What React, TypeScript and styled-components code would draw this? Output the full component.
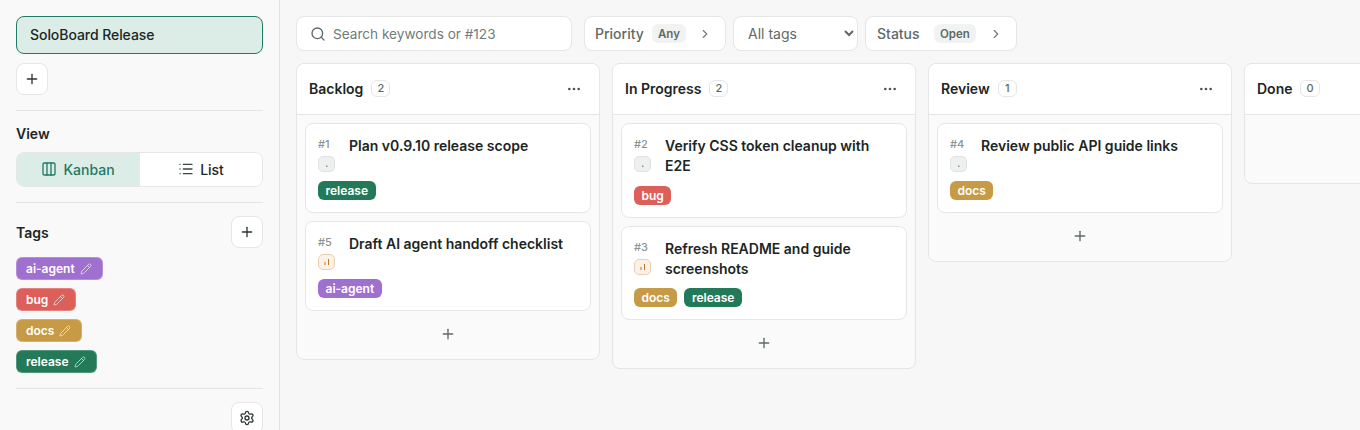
import React from 'react';
import styled, { createGlobalStyle } from 'styled-components';
import { Columns3, List, Pencil, Plus, Search, Settings, ChevronRight, Ellipsis } from 'lucide-react';

const TAG_COLORS: Record<string, string> = {
  'ai-agent': '#9f70cf',
  bug: '#dc5f5a',
  docs: '#c79a45',
  release: '#227a59',
};

type Priority = 'none' | 'medium';

interface CardData {
  id: number;
  title: string;
  priority: Priority;
  tags: string[];
}

interface ColumnData {
  name: string;
  cards: CardData[];
}

const columns: ColumnData[] = [
  {
    name: 'Backlog',
    cards: [
      { id: 1, title: 'Plan v0.9.10 release scope', priority: 'none', tags: ['release'] },
      { id: 5, title: 'Draft AI agent handoff checklist', priority: 'medium', tags: ['ai-agent'] },
    ],
  },
  {
    name: 'In Progress',
    cards: [
      { id: 2, title: 'Verify CSS token cleanup with E2E', priority: 'none', tags: ['bug'] },
      { id: 3, title: 'Refresh README and guide screenshots', priority: 'medium', tags: ['docs', 'release'] },
    ],
  },
  {
    name: 'Review',
    cards: [{ id: 4, title: 'Review public API guide links', priority: 'none', tags: ['docs'] }],
  },
  { name: 'Done', cards: [] },
];

const App = () => {
  return (
    <Page>
      <GlobalStyle />
      <Sidebar>
        <ProjectButton>SoloBoard Release</ProjectButton>
        <IconButton $top={9} aria-label='Add board'>
          <Plus size={16} />
        </IconButton>
        <Divider />
        <SectionTitle>View</SectionTitle>
        <Segmented>
          <Segment $active>
            <Columns3 size={16} />
            Kanban
          </Segment>
          <Segment>
            <List size={16} />
            List
          </Segment>
        </Segmented>
        <Divider />
        <TagsHeader>
          <SectionTitle>Tags</SectionTitle>
          <IconButton aria-label='Add tag'>
            <Plus size={16} />
          </IconButton>
        </TagsHeader>
        <TagList>
          {Object.keys(TAG_COLORS).map((tag) => (
            <TagRow key={tag} $color={TAG_COLORS[tag]}>
              {tag}
              <Pencil size={12} strokeWidth={1.5} />
            </TagRow>
          ))}
        </TagList>
        <Divider />
        <SettingsRow>
          <IconButton aria-label='Settings'>
            <Settings size={16} />
          </IconButton>
        </SettingsRow>
      </Sidebar>
      <Main>
        <Toolbar>
          <SearchBox>
            <Search size={16} />
            Search keywords or #123
          </SearchBox>
          <FilterButton $width={142} $pad={10}>
            <FilterLabel>Priority</FilterLabel>
            <FilterValue>Any</FilterValue>
            <ChevronRight size={14} />
          </FilterButton>
          <TagSelect defaultValue='all'>
            <option value='all'>All tags</option>
          </TagSelect>
          <FilterButton $width={152} $pad={11}>
            <FilterLabel>Status</FilterLabel>
            <FilterValue>Open</FilterValue>
            <ChevronRight size={14} />
          </FilterButton>
        </Toolbar>
        <Board>
          {columns.map((column) => (
            <Column key={column.name}>
              <ColumnHeader>
                <ColumnName>{column.name}</ColumnName>
                <Count>{column.cards.length}</Count>
                {column.cards.length > 0 && (
                  <MoreButton aria-label='Column menu'>
                    <Ellipsis size={16} />
                  </MoreButton>
                )}
              </ColumnHeader>
              {column.cards.length > 0 ? (
                <ColumnBody>
                  {column.cards.map((card) => (
                    <Card key={card.id}>
                      <CardTop>
                        <CardMeta>
                          <CardId>#{card.id}</CardId>
                          <PriorityBadge $priority={card.priority}>
                            {card.priority === 'medium' ? (
                              <svg width='8' height='8' viewBox='0 0 8 8'>
                                <rect x='1.5' y='4' width='1' height='3' fill='#c2741f' />
                                <rect x='5' y='1' width='1' height='6' fill='#c2741f' />
                              </svg>
                            ) : (
                              <svg width='8' height='8' viewBox='0 0 8 8'>
                                <rect x='3' y='5.5' width='1.4' height='1.5' fill='#7d8985' />
                              </svg>
                            )}
                          </PriorityBadge>
                        </CardMeta>
                        <CardTitle>{card.title}</CardTitle>
                      </CardTop>
                      <CardTags>
                        {card.tags.map((tag) => (
                          <CardTag key={tag} $color={TAG_COLORS[tag]}>
                            {tag}
                          </CardTag>
                        ))}
                      </CardTags>
                    </Card>
                  ))}
                  <AddCard aria-label='Add card'>
                    <Plus size={16} />
                  </AddCard>
                </ColumnBody>
              ) : (
                <EmptyBody />
              )}
            </Column>
          ))}
        </Board>
      </Main>
    </Page>
  );
};

export default App;

const GlobalStyle = createGlobalStyle`
  html, body {
    margin: 0;
    height: 430px;
    overflow: hidden;
    background: #f7f7f7;
  }

  * {
    box-sizing: border-box;
  }

  body {
    font-family: Inter, 'Noto Sans', sans-serif;
    color: #1c2624;
  }
`;

const Page = styled.div`
  display: flex;
  width: 1360px;
  height: 430px;
  overflow: hidden;
`;

const Sidebar = styled.aside`
  flex: 0 0 280px;
  padding: 16px 16px 0;
  background: #f9f9f9;
  border-right: 1px solid #e4e4e4;
  display: flex;
  flex-direction: column;
  align-items: stretch;
  overflow: hidden;

  > * {
    flex: none;
  }
`;

const ProjectButton = styled.div`
  height: 38px;
  padding: 0 13px 2px;
  display: flex;
  align-items: center;
  font-size: 14px;
  letter-spacing: -0.06px;
  font-weight: 500;
  color: #1c2624;
  background: #dcede8;
  border: 1px solid #227a64;
  border-radius: 8px;
`;

const IconButton = styled.button<{ $top?: number }>`
  flex: none;
  width: 32px;
  height: 32px;
  margin-top: ${({ $top }) => $top || 0}px;
  padding: 0;
  display: flex;
  align-items: center;
  justify-content: center;
  color: #2c3634;
  background: #fff;
  border: 1px solid #e6e6e6;
  border-radius: 8px;
`;

const Divider = styled.div`
  height: 1px;
  margin: 15px 0 13px;
  background: #e4e4e4;
`;

const SectionTitle = styled.div`
  padding-top: 1px;
  font-size: 14px;
  line-height: 18px;
  font-weight: 600;
  color: #1c2624;
`;

const Segmented = styled.div`
  display: flex;
  height: 35px;
  margin-top: 9px;
  background: #fff;
  border: 1px solid #e6e6e6;
  border-radius: 8px;
  overflow: hidden;
`;

const Segment = styled.div<{ $active?: boolean }>`
  flex: 1;
  padding-bottom: 1px;
  display: flex;
  align-items: center;
  justify-content: center;
  gap: 6px;
  font-size: 14px;
  font-weight: 500;
  color: ${({ $active }) => ($active ? '#227a64' : '#1c2624')};
  background: ${({ $active }) => ($active ? '#dcede8' : '#fff')};
  border-right: ${({ $active }) => ($active ? '1px solid #e6e6e6' : 'none')};

  svg {
    color: ${({ $active }) => ($active ? '#227a64' : '#3c4644')};
  }
`;

const TagsHeader = styled.div`
  display: flex;
  align-items: center;
  justify-content: space-between;
`;

const TagList = styled.div`
  display: flex;
  flex-direction: column;
  align-items: flex-start;
  gap: 8px;
  margin-top: 9px;
`;

const TagRow = styled.div<{ $color: string }>`
  height: 23px;
  padding: 0 10px 0 9px;
  display: flex;
  align-items: center;
  gap: 5px;
  font-size: 12px;
  font-weight: 600;
  color: #fff;
  background: ${({ $color }) => $color};
  border: 1px solid rgba(255, 255, 255, 0.22);
  border-radius: 6px;

  svg {
    opacity: 0.85;
  }
`;

const SettingsRow = styled.div`
  display: flex;
  justify-content: flex-end;
`;

const Main = styled.main`
  flex: 1;
  min-width: 0;
  padding: 16px 0 0 16px;
  background: #f7f7f7;
`;

const Toolbar = styled.div`
  display: flex;
  gap: 7px;
  height: 35px;
`;

const SearchBox = styled.div`
  width: 276px;
  margin-right: 5px;
  padding: 0 13px;
  display: flex;
  align-items: center;
  gap: 7px;
  font-size: 13.6px;
  color: #717c78;
  background: #fff;
  border: 1px solid #e6e6e6;
  border-radius: 8px;

  svg {
    color: #5e6a66;
  }
`;

const FilterButton = styled.div<{ $width: number; $pad: number }>`
  width: ${({ $width }) => $width}px;
  padding: 0 13px 0 ${({ $pad }) => $pad}px;
  display: flex;
  align-items: center;
  font-size: 14px;
  font-weight: 500;
  color: #5e6a66;
  background: #fff;
  border: 1px solid #e6e6e6;
  border-radius: 8px;

  svg {
    margin-left: auto;
    color: #717c78;
  }
`;

const FilterLabel = styled.span`
  width: 57px;
`;

const FilterValue = styled.span`
  padding: 0 6px;
  height: 19px;
  line-height: 20px;
  font-size: 11.5px;
  font-weight: 600;
  color: #5e6a66;
  background: #f1f3f2;
  border-radius: 6px;
`;

const TagSelect = styled.select`
  width: 125px;
  padding: 0 2px 0 10px;
  font-family: inherit;
  font-size: 14px;
  color: #5e6a66;
  background: #fff;
  border: 1px solid #e6e6e6;
  border-radius: 8px;
`;

const Board = styled.div`
  display: flex;
  align-items: flex-start;
  gap: 12px;
  margin-top: 12px;
`;

const Column = styled.section`
  flex: 0 0 304px;
  background: #fafafa;
  border: 1px solid #e6e6e6;
  border-radius: 8px;
  overflow: hidden;
`;

const ColumnHeader = styled.header`
  height: 51px;
  padding: 0 12px 1px;
  display: flex;
  align-items: center;
  background: #fff;
  border-bottom: 1px solid #e6e6e6;
`;

const ColumnName = styled.h3`
  margin: 0;
  font-size: 14px;
  font-weight: 600;
  color: #1c2624;
`;

const Count = styled.span`
  margin-left: 8px;
  min-width: 19px;
  height: 17px;
  padding: 0 5px;
  line-height: 15px;
  font-size: 11px;
  font-weight: 500;
  text-align: center;
  color: #5e6a66;
  background: #fff;
  border: 1px solid #e6e6e6;
  border-radius: 6px;
`;

const MoreButton = styled.span`
  margin-left: auto;
  margin-right: 5px;
  display: flex;
  color: #4c5855;
`;

const ColumnBody = styled.div`
  padding: 8px;
  display: flex;
  flex-direction: column;
  gap: 8px;
`;

const EmptyBody = styled.div`
  height: 68px;
`;

const Card = styled.article`
  padding: 12px;
  background: #fff;
  border: 1px solid #e6e6e6;
  border-radius: 8px;
`;

const CardTop = styled.div`
  display: flex;
  gap: 14px;
`;

const CardMeta = styled.div`
  flex: 0 0 17px;
  display: flex;
  flex-direction: column;
  gap: 4px;
`;

const CardId = styled.span`
  font-size: 11px;
  line-height: 16px;
  color: #8a9591;
  font-weight: 500;
`;

const PriorityBadge = styled.span<{ $priority: Priority }>`
  width: 17px;
  height: 16px;
  display: flex;
  align-items: center;
  justify-content: center;
  background: ${({ $priority }) => ($priority === 'medium' ? '#fbf1e6' : '#eef0ef')};
  border: 1px solid ${({ $priority }) => ($priority === 'medium' ? '#e8cfb4' : '#dfe3e1')};
  border-radius: 5px;
`;

const CardTitle = styled.div`
  flex: 1;
  padding-bottom: 0.5px;
  font-size: 14px;
  line-height: 20px;
  font-weight: 600;
  color: #1c2624;
`;

const CardTags = styled.div`
  display: flex;
  gap: 7px;
  margin-top: 9px;
`;

const CardTag = styled.span<{ $color: string }>`
  height: 19px;
  padding: 0 7.5px;
  line-height: 19px;
  font-size: 12px;
  font-weight: 600;
  color: #fff;
  background: ${({ $color }) => $color};
  border-radius: 6px;
`;

const AddCard = styled.div`
  height: 32px;
  padding-bottom: 2px;
  display: flex;
  align-items: center;
  justify-content: center;
  color: #5e6a66;
`;
